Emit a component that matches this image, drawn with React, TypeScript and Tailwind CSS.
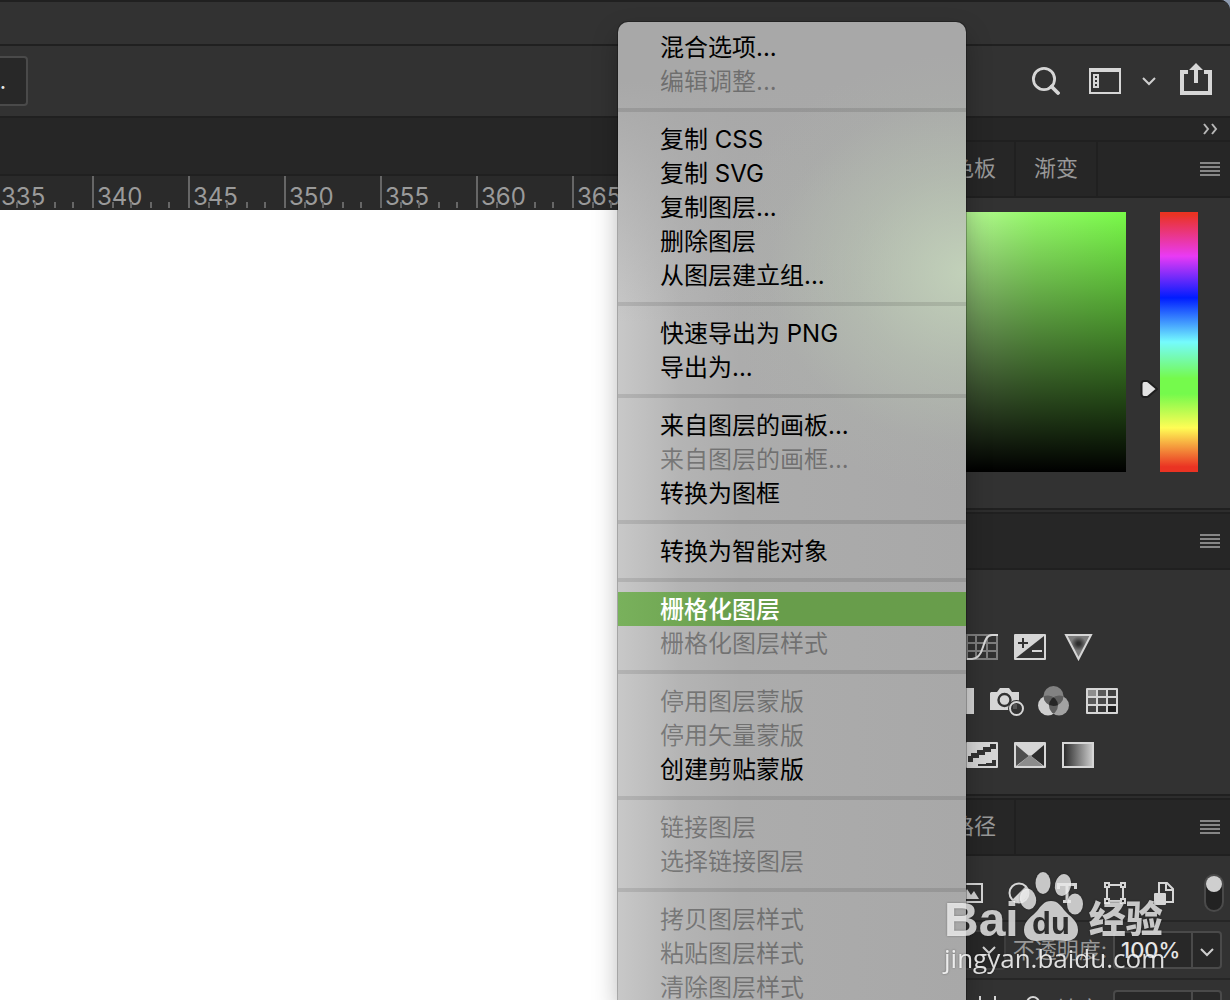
import type { ReactNode } from "react";
import clsx from "clsx";

type MenuEntry = { label: string; disabled?: boolean; active?: boolean };

const menuGroups: MenuEntry[][] = [
  [{ label: "混合选项..." }, { label: "编辑调整...", disabled: true }],
  [
    { label: "复制 CSS" },
    { label: "复制 SVG" },
    { label: "复制图层..." },
    { label: "删除图层" },
    { label: "从图层建立组..." },
  ],
  [{ label: "快速导出为 PNG" }, { label: "导出为..." }],
  [
    { label: "来自图层的画板..." },
    { label: "来自图层的画框...", disabled: true },
    { label: "转换为图框" },
  ],
  [{ label: "转换为智能对象" }],
  [
    { label: "栅格化图层", active: true },
    { label: "栅格化图层样式", disabled: true },
  ],
  [
    { label: "停用图层蒙版", disabled: true },
    { label: "停用矢量蒙版", disabled: true },
    { label: "创建剪贴蒙版" },
  ],
  [
    { label: "链接图层", disabled: true },
    { label: "选择链接图层", disabled: true },
  ],
  [
    { label: "拷贝图层样式", disabled: true },
    { label: "粘贴图层样式", disabled: true },
    { label: "清除图层样式", disabled: true },
  ],
];

const rulerMarks = Array.from({ length: 24 }, (_, i) => 335 + i * 5);

/* ---------- toolbar icons ---------- */

function SearchIcon() {
  return (
    <svg width="28" height="28" viewBox="0 0 28 28" fill="none" stroke="#d6d6d6">
      <circle cx="12" cy="12" r="10.6" strokeWidth="2.8" />
      <path d="M19.5 19.5 26 26" strokeWidth="3.8" strokeLinecap="round" />
    </svg>
  );
}

function WorkspaceIcon() {
  return (
    <svg width="32" height="26" viewBox="0 0 32 26" fill="none">
      <path d="M1 3h30v22H1z" stroke="#d6d6d6" strokeWidth="2" />
      <path d="M0 0h32v4H0z" fill="#d6d6d6" />
      <path d="M4 6h6v14H4z" fill="#d6d6d6" />
      <path d="M6 8h2v2H6zM6 12h2v2H6zM6 16h2v2H6z" fill="#323232" />
    </svg>
  );
}

function ShareIcon() {
  return (
    <svg className="mb-1" width="32" height="32" viewBox="0 0 32 32" fill="#d6d6d6">
      <path d="M0 7h8v4H4v17h24V11h-4V7h8v25H0z" />
      <path d="M16 0l7 7h-5v13h-4V7H9z" />
    </svg>
  );
}

function ChevronDown() {
  return (
    <svg width="14" height="10" viewBox="0 0 14 10" fill="none" stroke="#cfcfcf" strokeWidth="2">
      <path d="M1 2l6 6 6-6" />
    </svg>
  );
}

function PanelMenuIcon() {
  return (
    <svg width="20" height="14" viewBox="0 0 20 14" fill="#868686">
      <path d="M0 0h20v2H0zM0 4h20v2H0zM0 8h20v2H0zM0 12h20v2H0z" />
    </svg>
  );
}

/* ---------- adjustment icons ---------- */

function CurvesIcon() {
  return (
    <svg width="32" height="26" viewBox="0 0 32 26" fill="none">
      <path d="M1 1h30v24H1zM10 1v24M21 1v24M1 9h30M1 17h30" stroke="#7e7e7e" strokeWidth="2" />
      <path d="M1 25h5c6 0 9-5 11-12s4-12 9-12h6" stroke="#d6d6d6" strokeWidth="2" />
    </svg>
  );
}

function ExposureIcon() {
  return (
    <svg width="32" height="26" viewBox="0 0 32 26">
      <rect width="32" height="26" rx="1" fill="#d6d6d6" />
      <path d="M30 2v22H2z" fill="#323232" />
      <path d="M4 8h10v2H4zM8 4h2v10H8z" fill="#323232" />
      <path d="M18 16h10v2H18z" fill="#d6d6d6" />
    </svg>
  );
}

function VibranceIcon() {
  return (
    <svg width="32" height="28" viewBox="0 0 32 28">
      <defs>
        <radialGradient id="vib" cx="0.5" cy="0.36" r="0.3">
          <stop offset="0.2" stopColor="#2e2e2e" />
          <stop offset="1" stopColor="#7c7c7c" />
        </radialGradient>
      </defs>
      <path d="M4 2h25L16.500 26z" fill="url(#vib)" stroke="#d6d6d6" strokeWidth="2" />
    </svg>
  );
}

function BlackWhiteIcon() {
  return (
    <svg width="32" height="26" viewBox="0 0 32 26">
      <rect x="1" y="1" width="30" height="24" fill="#323232" stroke="#d6d6d6" strokeWidth="2" />
      <path d="M16 0h16v26H16z" fill="#d6d6d6" />
    </svg>
  );
}

function PhotoFilterIcon() {
  return (
    <svg width="34" height="30" viewBox="0 0 34 30">
      <path d="M1 6h6l3-4h9l3 4h7v9L19 24H0V7z" fill="#d6d6d6" />
      <circle cx="14.500" cy="14" r="6" fill="#d6d6d6" stroke="#323232" strokeWidth="2.400" />
      <circle cx="26.500" cy="22.500" r="8.500" fill="#323232" />
      <circle cx="26.500" cy="22.500" r="6.500" fill="#323232" stroke="#d6d6d6" strokeWidth="2" />
      <path d="M23 18h4v5h-4z" fill="#555" />
    </svg>
  );
}

function ChannelMixerIcon() {
  return (
    <svg width="32" height="30" viewBox="0 0 32 30">
      <defs>
        <clipPath id="mixTop">
          <circle cx="15.500" cy="10" r="10" />
        </clipPath>
        <clipPath id="mixLeft">
          <circle cx="10" cy="19.500" r="10" />
        </clipPath>
      </defs>
      <circle cx="10" cy="19.500" r="10" fill="#cfcfcf" />
      <circle cx="21" cy="19.500" r="10" fill="#a2a2a2" />
      <circle cx="15.500" cy="10" r="10" fill="#828282" />
      <g clipPath="url(#mixTop)">
        <circle cx="10" cy="19.500" r="10" fill="#5e5e5e" />
        <circle cx="21" cy="19.500" r="10" fill="#5e5e5e" />
      </g>
      <g clipPath="url(#mixLeft)">
        <circle cx="21" cy="19.500" r="10" fill="#5e5e5e" />
        <g clipPath="url(#mixTop)">
          <circle cx="21" cy="19.500" r="10" fill="#252525" />
        </g>
      </g>
    </svg>
  );
}

function LookupIcon() {
  const cells = ["#8e8e8e", "#5a5a5a", "#404040", "#5a5a5a", "#4a4a4a", "#3a3a3a", "#404040", "#363636", "#1e1e1e"];
  return (
    <svg width="32" height="26" viewBox="0 0 32 26">
      <rect width="32" height="26" rx="1" fill="#d6d6d6" />
      {cells.map((fill, i) => (
        <rect key={i} x={2 + (i % 3) * 10} y={2 + Math.floor(i / 3) * 8} width="8" height="6" fill={fill} />
      ))}
    </svg>
  );
}

function PosterizeIcon() {
  return (
    <svg width="32" height="26" viewBox="0 0 32 26">
      <rect width="32" height="26" rx="1" fill="#d6d6d6" />
      <path d="M2 20v-6h3v-3h6V8h6V5h7V2h6v5h-5v3h-6v3h-6v3H7v4z" fill="#323232" />
      <path d="M12 24v-2h8v-1h6v-3h4v6z" fill="#323232" />
    </svg>
  );
}

function SelectiveColorIcon() {
  return (
    <svg width="32" height="26" viewBox="0 0 32 26">
      <rect width="32" height="26" rx="1" fill="#d6d6d6" />
      <path d="M2 3l13 11L2 24z" fill="#4e4e4e" />
      <path d="M30 3L17 14l13 10z" fill="#2c2c2c" />
      <path d="M3 24l13-11 13 11z" fill="#8c8c8c" />
    </svg>
  );
}

function GradientMapIcon() {
  return (
    <svg width="32" height="26" viewBox="0 0 32 26">
      <defs>
        <linearGradient id="gmap">
          <stop offset="0" stopColor="#262626" />
          <stop offset="1" stopColor="#cfcfcf" />
        </linearGradient>
      </defs>
      <rect x="1" y="1" width="30" height="24" fill="url(#gmap)" stroke="#d6d6d6" strokeWidth="2" />
    </svg>
  );
}

const adjustmentRows = [
  { pad: "pl-8", icons: [["曲线", CurvesIcon], ["曝光度", ExposureIcon], ["自然饱和度", VibranceIcon]] },
  {
    pad: "pl-2",
    icons: [["黑白", BlackWhiteIcon], ["照片滤镜", PhotoFilterIcon], ["通道混合器", ChannelMixerIcon], ["颜色查找", LookupIcon]],
  },
  { pad: "pl-8", icons: [["色调分离", PosterizeIcon], ["可选颜色", SelectiveColorIcon], ["渐变映射", GradientMapIcon]] },
] as { pad: string; icons: [string, () => ReactNode][] }[];

/* ---------- layer filter icons ---------- */

const layerFilters: [string, ReactNode][] = [
  [
    "像素图层",
    <svg key="px" width="24" height="24" viewBox="0 0 24 24">
      <path d="M1 3h22v18H1z" fill="none" stroke="#d6d6d6" strokeWidth="2" />
      <path d="M4 18v-4l4-6 4 6 3-4 5 8z" fill="#d6d6d6" />
    </svg>,
  ],
  [
    "调整图层",
    <svg key="adj" width="24" height="24" viewBox="0 0 24 24">
      <circle cx="12" cy="12" r="9.500" fill="none" stroke="#d6d6d6" strokeWidth="2" />
      <path d="M19 5a10 10 0 0 1-14 14z" fill="#d6d6d6" />
    </svg>,
  ],
  [
    "文字图层",
    <svg key="type" width="24" height="24" viewBox="0 0 24 24" fill="none" stroke="#d6d6d6" strokeWidth="3">
      <path d="M3.500 8V3.500h17V8M12 3v18M8 20.500h8" />
    </svg>,
  ],
  [
    "形状图层",
    <svg key="shape" width="24" height="24" viewBox="0 0 24 24" fill="#323232" stroke="#d6d6d6" strokeWidth="2">
      <path d="M4 4h16v16H4z" />
      <path d="M2 2h4v4H2zM18 2h4v4h-4zM2 18h4v4H2zM18 18h4v4h-4z" />
    </svg>,
  ],
  [
    "智能对象",
    <svg key="smart" width="24" height="24" viewBox="0 0 24 24">
      <path d="M8 14V2h8l6 6v13H12M15 2v7h7" fill="none" stroke="#d6d6d6" strokeWidth="2" />
      <rect x="3" y="12" width="12" height="12" rx="1" fill="#d6d6d6" />
    </svg>,
  ],
];

/* ---------- panels ---------- */

function PanelTabs({ tabs }: { tabs: string[] }) {
  return (
    <div className="flex h-14 shrink-0 items-stretch border-b-2 border-[#202020] bg-[#262626]">
      {tabs.map((tab) => (
        <button key={tab} type="button" className="border-r-2 border-[#202020] px-[18px] pb-[2px] text-[22px] text-[#989898]">
          {tab}
        </button>
      ))}
      <button type="button" aria-label="面板菜单" className="ml-auto px-[10px]">
        <PanelMenuIcon />
      </button>
    </div>
  );
}

function PanelGap() {
  return <div className="h-[6px] shrink-0 border-y-2 border-[#202020] bg-[#2d2d2d]" />;
}

function ColorPanel() {
  return (
    <div className="flex h-[310px] shrink-0 justify-end bg-[#323232] pt-[14px] pr-8">
      <div className="ml-3 h-[260px] flex-1 bg-[linear-gradient(to_top,#000,transparent),linear-gradient(to_right,#bef5a0,#93f868_50%,#79fa49)]" />
      <div className="relative ml-[34px] h-[260px] w-[38px] bg-[linear-gradient(to_bottom,#ea3323_1%,#e93af5_17%,#001cff_33%,#75fbfd_50%,#75fa4c_64%,#75fa4c_70%,#fffd55_83%,#ea3323_98%)]">
        <input
          type="range"
          aria-label="色相"
          min={0}
          max={360}
          defaultValue={108}
          className="absolute inset-0 h-full w-full opacity-0"
        />
        <svg className="absolute top-[167px] -left-5" width="20" height="20" viewBox="0 0 20 20">
          <path
            d="M4 2h3c1 0 2 1 3 2l7 6-7 6c-1 1-2 2-3 2H4c-1 0-2.500-1-2.500-3V5C1.500 3 3 2 4 2z"
            fill="#e2e2e2"
            stroke="#1e1e1e"
            strokeWidth="2"
            strokeLinejoin="round"
          />
        </svg>
      </div>
    </div>
  );
}

function AdjustmentsPanel() {
  return (
    <div className="flex h-56 shrink-0 flex-col gap-[22px] bg-[#323232] pt-[61px]">
      {adjustmentRows.map(({ pad, icons }, row) => (
        <div key={row} className={clsx("flex h-8 items-center gap-4", pad)}>
          {icons.map(([name, Icon]) => (
            <button key={name} type="button" aria-label={name} className="flex w-8 [&>svg]:shrink-0">
              <Icon />
            </button>
          ))}
        </div>
      ))}
    </div>
  );
}

function PercentField({ label, value }: { label: string; value: string }) {
  return (
    <label className="ml-auto flex items-center gap-[6px] text-[22px] text-[#989898]">
      {label}
      <span className="flex h-[38px] w-[109px] rounded border-2 border-[#4a4a4a] bg-[#282828]">
        <input
          defaultValue={value}
          className="w-[78px] border-r-2 border-[#4a4a4a] pt-px pl-[6px] text-[22px] font-medium text-[#e6e6e6]"
        />
        <span className="flex flex-1 items-center justify-center pt-1">
          <ChevronDown />
        </span>
      </span>
    </label>
  );
}

function LayersPanel() {
  return (
    <div className="min-h-0 flex-1 overflow-hidden bg-[#323232]">
      <div className="flex h-[66px] items-start border-b-2 border-[#262626] pt-[18px] pr-[6px] pl-[25px]">
        <div className="flex gap-6 pt-[7px]">
          {layerFilters.map(([name, icon]) => (
            <button key={name} type="button" aria-label={name}>
              {icon}
            </button>
          ))}
        </div>
        <button
          type="button"
          role="switch"
          aria-checked="true"
          aria-label="图层过滤"
          className="ml-auto flex h-[38px] w-5 justify-center rounded-full border-2 border-[#4a4a4a] bg-[#222]"
        >
          <span className="size-4 shrink-0 rounded-full bg-[#cfcfcf]" />
        </button>
      </div>
      <div className="flex h-[58px] items-center border-b-2 border-[#262626] pr-2">
        <button
          type="button"
          aria-label="混合模式"
          className="flex h-[40px] w-[72px] items-center justify-end rounded-r border-2 border-l-0 border-[#3e3e3e] bg-[#282828] pr-2"
        >
          <ChevronDown />
        </button>
        <PercentField label="不透明度:" value="100%" />
      </div>
      <div className="flex h-[58px] items-center pr-2 pl-10">
        <button type="button" aria-label="防止嵌套">
          <svg width="28" height="26" viewBox="0 0 28 26" fill="none" stroke="#d6d6d6" strokeWidth="2">
            <path d="M6 0v26M21 0v26M0 6h28M0 20h28" />
          </svg>
        </button>
        <button type="button" aria-label="锁定全部" className="ml-[21px]">
          <svg width="20" height="26" viewBox="0 0 20 26">
            <path d="M4 12V7a6 6 0 0 1 12 0v5" fill="none" stroke="#d6d6d6" strokeWidth="2" />
            <rect x="1" y="11" width="18" height="14" rx="1" fill="#d6d6d6" />
          </svg>
        </button>
        <PercentField label="填充:" value="100%" />
      </div>
    </div>
  );
}

function Ruler() {
  return (
    <div className="-ml-1 flex h-[34px] overflow-hidden bg-[#2a2a2a]">
      {rulerMarks.map((mark) => (
        <div key={mark} className="grid w-24 shrink-0">
          <span className="col-start-1 row-start-1 pt-[5px] pl-[5px] text-2xl text-[#9a9a9a]">{mark}</span>
          <svg className="col-start-1 row-start-1" width="96" height="34" viewBox="0 0 96 34" fill="#666">
            <path d="M0 0h2v32H0zM20 26h2v6h-2zM38 26h2v6h-2zM58 26h2v6h-2zM76 26h2v6h-2z" />
          </svg>
        </div>
      ))}
    </div>
  );
}

function ContextMenu() {
  return (
    <nav
      aria-label="图层菜单"
      className="absolute top-[22px] bottom-0 left-[618px] w-[348px] overflow-hidden rounded-t-[10px] bg-[#aaaaaa] bg-[radial-gradient(250px_220px_at_100%_250px,rgba(198,216,188,0.85),rgba(190,205,182,0.45)_45%,rgba(180,190,175,0.12)_78%,transparent),linear-gradient(to_bottom,#a8a8a8_60px,transparent_300px),linear-gradient(to_right,#c8c8c8,#b4b4b4_18%,#acacac_35%,#a8a8a8)] pt-2 shadow-[0_0_0_1px_rgba(0,0,0,0.25),0_12px_26px_rgba(0,0,0,0.28)]"
    >
      {menuGroups.map((group, i) => (
        <ul key={i} className={clsx(i > 0 && "mt-[10px] border-t-4 border-black/10 pt-[10px]")}>
          {group.map(({ label, disabled, active }) => (
            <li key={label}>
              <button
                type="button"
                disabled={disabled}
                className={clsx(
                  "block h-[34px] w-full pl-[42px] text-left text-2xl leading-9",
                  disabled && "text-black/35",
                  active && "bg-linear-to-r from-[#79b15c] to-[#689d4b] to-35% font-medium text-white",
                  !disabled && !active && "text-black",
                )}
              >
                {label}
              </button>
            </li>
          ))}
        </ul>
      ))}
    </nav>
  );
}

function Watermark() {
  return (
    <div className="pointer-events-none absolute right-[62px] bottom-[26px] w-[224px] text-white drop-shadow-[0_0_1px_rgba(0,0,0,0.4)]">
      <div className="flex h-[72px] items-end opacity-75">
        <span className="font-['Liberation_Sans',sans-serif] text-[48px] leading-[44px] font-bold">Bai</span>
        <svg className="shrink-0" width="66" height="72" viewBox="0 0 64 72" fill="#fff">
          <ellipse cx="23" cy="13" rx="7.500" ry="11" />
          <ellipse cx="43" cy="15" rx="8" ry="11" transform="rotate(12 43 15)" />
          <ellipse cx="8" cy="29" rx="8" ry="10.500" transform="rotate(-12 8 29)" />
          <ellipse cx="55" cy="34" rx="8" ry="10.500" />
          <path d="M31 31c7 0 10 5 14 10s13 9 13 19c0 7-5 11-12 11-6 0-9-1-15-1s-9 1-15 1C9 71 4 67 4 60c0-10 9-14 13-19s7-10 14-10z" />
          <text x="31" y="64" textAnchor="middle" fontSize="31" fontWeight="700" fill="#333" fontFamily="Liberation Sans, sans-serif">
            du
          </text>
        </svg>
        <span className="ml-1 text-[37px] leading-[44px] font-black">经验</span>
      </div>
      <div className="font-['Open_Sans',sans-serif] text-[26px] leading-8 font-medium opacity-85">jingyan.baidu.com</div>
    </div>
  );
}

export default function App() {
  return (
    <div className="h-screen bg-[#8d9bb0]">
      <div className="relative flex h-full flex-col overflow-hidden rounded-tr-[10px] bg-[#262626] font-[Inter,'Noto_Sans_CJK_SC',sans-serif]">
        <div className="h-[46px] shrink-0 border-y-2 border-[#202020] bg-[#323232]" />
        <header className="flex h-[72px] shrink-0 items-center border-b-2 border-[#202020] bg-[#323232] pr-[18px]">
          <button
            type="button"
            className="-ml-[72px] h-[50px] w-[100px] rounded border-2 border-[#4a4a4a] bg-[#282828] pr-5 text-right text-[22px] text-[#e6e6e6]"
          >
            ...
          </button>
          <div className="ml-auto flex items-center">
            <button type="button" aria-label="搜索">
              <SearchIcon />
            </button>
            <button type="button" aria-label="工作区" className="ml-[29px]">
              <WorkspaceIcon />
            </button>
            <button type="button" aria-label="选择工作区" className="ml-[21px]">
              <ChevronDown />
            </button>
            <button type="button" aria-label="共享" className="ml-6">
              <ShareIcon />
            </button>
          </div>
        </header>

        <div className="flex min-h-0 flex-1">
          <main className="flex min-w-0 flex-1 flex-col">
            <div className="h-[58px] shrink-0 border-b-2 border-[#202020]" />
            <Ruler />
            <div className="flex-1 bg-white" />
          </main>
          <aside className="flex w-[296px] shrink-0 flex-col">
            <div className="flex h-6 shrink-0 items-center justify-end border-b-2 border-[#202020] pr-3">
              <button type="button" aria-label="折叠面板">
                <svg width="16" height="12" viewBox="0 0 16 12" fill="none" stroke="#b5b5b5" strokeWidth="2">
                  <path d="M2 1l4 5-4 5M10 1l4 5-4 5" />
                </svg>
              </button>
            </div>
            <PanelTabs tabs={["色板", "渐变"]} />
            <ColorPanel />
            <PanelGap />
            <PanelTabs tabs={[]} />
            <AdjustmentsPanel />
            <PanelGap />
            <PanelTabs tabs={["路径"]} />
            <LayersPanel />
          </aside>
        </div>

        <ContextMenu />
        <Watermark />
      </div>
    </div>
  );
}
